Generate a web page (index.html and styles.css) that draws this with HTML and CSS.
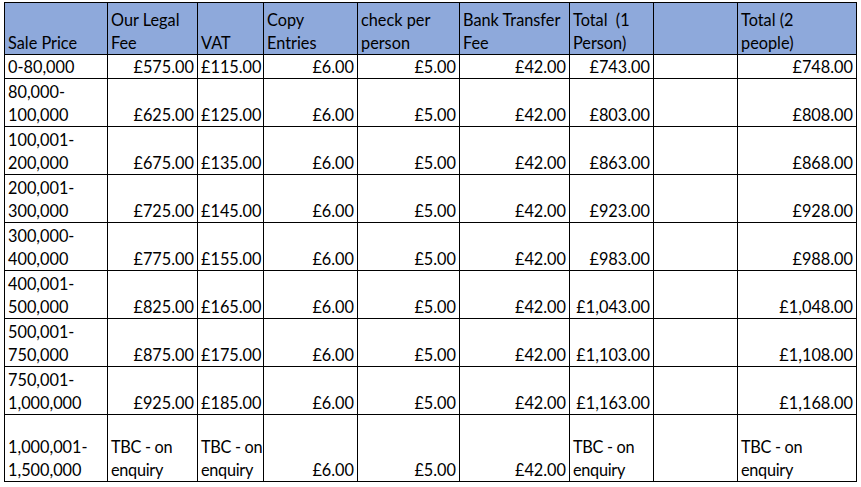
FILE: index.html
```html
<!DOCTYPE html>
<html lang="en">
<head>
<meta charset="utf-8">
<title>Legal fees</title>
<link rel="stylesheet" href="styles.css">
</head>
<body>
<table class="fees">
  <colgroup>
    <col class="c1"><col class="c2"><col class="c3"><col class="c4"><col class="c5"><col class="c6"><col class="c7"><col class="c8"><col class="c9">
  </colgroup>
  <thead>
    <tr class="head">
      <th>Sale Price</th>
      <th>Our Legal<br>Fee</th>
      <th>VAT</th>
      <th>Copy<br>Entries</th>
      <th>check per<br>person</th>
      <th>Bank Transfer<br>Fee</th>
      <th>Total&nbsp; (1<br>Person)</th>
      <th></th>
      <th>Total (2<br>people)</th>
    </tr>
  </thead>
  <tbody>
    <tr class="single">
      <td>0-80,000</td><td class="num">£575.00</td><td class="num">£115.00</td><td class="num">£6.00</td><td class="num">£5.00</td><td class="num">£42.00</td><td class="num">£743.00</td><td></td><td class="num">£748.00</td>
    </tr>
    <tr class="double">
      <td>80,000-<br>100,000</td><td class="num">£625.00</td><td class="num">£125.00</td><td class="num">£6.00</td><td class="num">£5.00</td><td class="num">£42.00</td><td class="num">£803.00</td><td></td><td class="num">£808.00</td>
    </tr>
    <tr class="double">
      <td>100,001-<br>200,000</td><td class="num">£675.00</td><td class="num">£135.00</td><td class="num">£6.00</td><td class="num">£5.00</td><td class="num">£42.00</td><td class="num">£863.00</td><td></td><td class="num">£868.00</td>
    </tr>
    <tr class="double">
      <td>200,001-<br>300,000</td><td class="num">£725.00</td><td class="num">£145.00</td><td class="num">£6.00</td><td class="num">£5.00</td><td class="num">£42.00</td><td class="num">£923.00</td><td></td><td class="num">£928.00</td>
    </tr>
    <tr class="double">
      <td>300,000-<br>400,000</td><td class="num">£775.00</td><td class="num">£155.00</td><td class="num">£6.00</td><td class="num">£5.00</td><td class="num">£42.00</td><td class="num">£983.00</td><td></td><td class="num">£988.00</td>
    </tr>
    <tr class="double">
      <td>400,001-<br>500,000</td><td class="num">£825.00</td><td class="num">£165.00</td><td class="num">£6.00</td><td class="num">£5.00</td><td class="num">£42.00</td><td class="num">£1,043.00</td><td></td><td class="num">£1,048.00</td>
    </tr>
    <tr class="double">
      <td>500,001-<br>750,000</td><td class="num">£875.00</td><td class="num">£175.00</td><td class="num">£6.00</td><td class="num">£5.00</td><td class="num">£42.00</td><td class="num">£1,103.00</td><td></td><td class="num">£1,108.00</td>
    </tr>
    <tr class="double">
      <td>750,001-<br>1,000,000</td><td class="num">£925.00</td><td class="num">£185.00</td><td class="num">£6.00</td><td class="num">£5.00</td><td class="num">£42.00</td><td class="num">£1,163.00</td><td></td><td class="num">£1,168.00</td>
    </tr>
    <tr class="last">
      <td>1,000,001-<br>1,500,000</td><td class="tbc">TBC - on<br>enquiry</td><td class="tbc">TBC - on<br>enquiry</td><td class="num">£6.00</td><td class="num">£5.00</td><td class="num">£42.00</td><td class="tbc">TBC - on<br>enquiry</td><td></td><td class="tbc">TBC - on<br>enquiry</td>
    </tr>
  </tbody>
</table>
</body>
</html>
```

FILE: styles.css
```css
html, body {
  margin: 0;
  padding: 0;
  background: #ffffff;
}

body {
  font-family: Lato, "Liberation Sans", sans-serif;
  font-size: 16.3px;
  color: #000000;
}

.fees {
  border-collapse: collapse;
  table-layout: fixed;
  margin: 2px 0 0 4px;
  width: 853px;
}

.c1 { width: 103px; }
.c2 { width: 90px; }
.c3 { width: 66px; }
.c4 { width: 94px; }
.c5 { width: 102px; }
.c6 { width: 110px; }
.c7 { width: 84px; }
.c8 { width: 84px; }
.c9 { width: 119px; }

.fees th,
.fees td {
  border: 1px solid #000000;
  padding: 0 3px 0 3px;
  line-height: 23px;
  vertical-align: bottom;
  text-align: left;
  white-space: nowrap;
  overflow: hidden;
}

.fees th {
  background: #8ea9db;
  font-weight: normal;
}

.fees td.num {
  text-align: right;
}

.fees td.tbc {
  padding-right: 0;
  letter-spacing: -0.3px;
}

.head { height: 52px; }
.single { height: 24px; }
.double { height: 48px; }
.last { height: 67px; }
```
